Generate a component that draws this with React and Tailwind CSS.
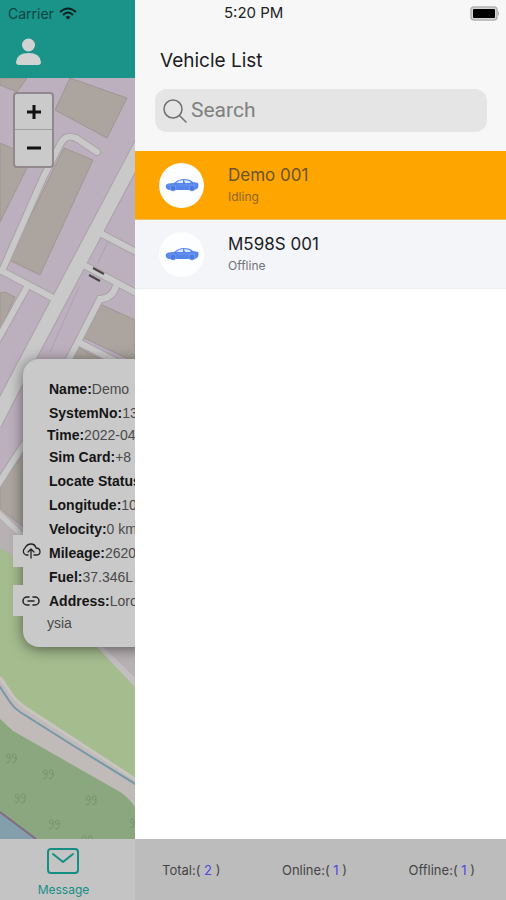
import { clsx } from "clsx";

const details = [
  { label: "Name:", value: "Demo" },
  { label: "SystemNo:", value: "13" },
  { label: "Time:", value: "2022-04", tight: true },
  { label: "Sim Card:", value: "+8" },
  { label: "Locate Status", value: "" },
  { label: "Longitude:", value: "10" },
  { label: "Velocity:", value: "0 km" },
  { label: "Mileage:", value: "2620" },
  { label: "Fuel:", value: "37.346L" },
  { label: "Address:", value: "Loro" },
];

const vehicles = [
  { name: "Demo 001", status: "Idling", active: true },
  { name: "M598S 001", status: "Offline", active: false },
];

const totals = [
  { label: "Total:", count: 2 },
  { label: "Online:", count: 1 },
  { label: "Offline:", count: 1 },
];

const roads = [
  "M97 152L76 138Q66 134 61 143L43 178L2 271",
  "M2 271L53 298",
  "M27 287L-3 341",
  "M100 233L140 254",
  "M80 263L140 295",
  "M116 286Q112 299 100 299L66 365",
  "M78 342L117 362",
  "M24 444L-3 486",
];

const buildings = [
  "70,78 127,98 107,138 55,110",
  "0,78 27,78 17,92 0,85",
  "0,143 30,156 27,168 0,222",
  "64,148 93,160 40,275 9,260",
  "0,293 5,292 15,297 0,330",
  "98,303 135,320 135,362 82,337",
  "77,347 102,360 70,360",
  "0,485 24,454 24,527 0,509",
];

const trees = [
  [5, 753],
  [42, 769],
  [14, 793],
  [85, 795],
  [48, 819],
  [129, 818],
  [81, 835],
];

function MapCanvas() {
  return (
    <svg
      className="absolute inset-0 h-full w-full"
      viewBox="0 78 135 761"
      preserveAspectRatio="xMinYMin slice"
      aria-hidden="true"
    >
      <rect y="78" width="135" height="761" fill="#bdb0be" />
      {buildings.map((points) => (
        <polygon key={points} points={points} fill="#aca59f" stroke="#9f9691" strokeWidth="1" />
      ))}

      {/* streets: darker casing first, then the fill */}
      <g fill="none" stroke="#aaa1a8">
        <path d="M146 136L20 374L-6 424" strokeWidth="16" />
        {roads.map((d) => (
          <path key={d} d={d} strokeWidth="8" strokeLinecap="round" />
        ))}
      </g>
      <g fill="none" stroke="#c9c9c9" strokeLinecap="round">
        <path d="M146 136L20 374L-6 424" strokeWidth="14" />
        {roads.map((d) => (
          <path key={d} d={d} strokeWidth="6" />
        ))}
      </g>
      <path d="M108 241L98 263M79 287L50 352" stroke="#ada1ae" fill="none" />
      <path d="M93 268L104 274M89 275L100 281" stroke="#4b4447" strokeWidth="2" />

      {/* park and canal */}
      <path d="M0 509L24 530L24 600L135 640V700L0 570Z" fill="#b8b1b4" />
      <path d="M-3 512L24 537" stroke="#c9c9c9" strokeWidth="5" />
      <path d="M90 640L140 688" stroke="#c4bfbf" strokeWidth="8" />
      <path d="M0 548Q14 555 30 572L96 646L135 687V839H0Z" fill="#a4bc8e" />
      <path
        d="M0 677L12 695Q17 702 26 708L135 779V807Q129 798 120 792L13 731L0 719Z"
        fill="#c0bab8"
      />
      <path d="M0 677L12 695Q17 702 26 708L135 779" stroke="#c8c5c0" strokeWidth="3" fill="none" />
      <path d="M0 719L13 731L120 792Q129 798 135 807V839H0Z" fill="#8aa77f" />
      <path d="M-2 684L10 702Q14 708 20 712L77 748L137 785" stroke="#7598a8" strokeWidth="2" fill="none" />
      <path d="M0 813L35 839H0Z" fill="#839fab" />
      <path d="M0 812L36 839" stroke="#806b83" strokeWidth="2" />
      <g fill="none" stroke="#76946e">
        {trees.map(([x, y]) => (
          <path
            key={`${x}-${y}`}
            transform={`translate(${x} ${y})`}
            d="M5 4A2 2 0 1 1 5 2V7L3 10M11 4A2 2 0 1 1 11 2V7L9 10M1 9L3 10M7 9L9 10"
          />
        ))}
      </g>
    </svg>
  );
}

function WifiIcon() {
  return (
    <svg viewBox="0 0 18 13" className="h-[13px] w-[18px]" fill="none" stroke="#06211f" strokeWidth="2">
      <path d="M1 5Q9 -2 17 5M4 8Q9 3 14 8" />
      <path d="M6.500 10Q9 8 11.500 10L9 12.500Z" fill="#06211f" stroke="none" />
    </svg>
  );
}

function BatteryIcon() {
  return (
    <svg viewBox="0 0 30 15" className="h-[15px] w-[30px]">
      <rect x="1" y="1" width="26" height="13" rx="3" fill="#d4d4d4" stroke="#b2b2b2" strokeWidth="1.500" />
      <rect x="3" y="3" width="22" height="9" rx="1" fill="#000" />
      <path d="M28 5Q30 7.500 28 10Z" fill="#a8a8a8" />
    </svg>
  );
}

function CarIcon() {
  return (
    <svg viewBox="0 0 34 14" className="h-[14px] w-[34px]">
      <path
        d="M1 7Q2 5 9 5Q14 1 19 1Q25 1 28 4L33 5Q34 7 33 10L30 12H4Q0 11 1 7Z"
        fill="#5584ea"
      />
      <path d="M11 5Q14 2 18 2V5ZM19 2Q23 2 26 4L25 5H20Z" fill="#dce7fd" />
      <g fill="#4a79e2" stroke="#7ca2f3" strokeWidth="0.800">
        <circle cx="8" cy="10" r="3" />
        <circle cx="27" cy="10" r="3" />
      </g>
      <path d="M2 7H5M12 7H31" stroke="#6d96f0" />
    </svg>
  );
}

function MapPopup() {
  return (
    <div className="absolute left-[23px] top-[281px] w-[300px] rounded-2xl bg-[#c9c9c9] pb-[14px] pl-[26px] pt-[18px] text-[14px] text-[#4a4a4a] shadow-[0_2px_14px_rgba(0,0,0,0.5)]">
      {details.map(({ label, value, tight }) => (
        <p
          key={label}
          className={clsx("whitespace-nowrap", tight ? "-ml-[2px] leading-5" : "leading-6")}
        >
          <b className="text-[#151515]">{label}</b>
          {value}
        </p>
      ))}
      <p className="-ml-[2px] leading-5">ysia</p>
    </div>
  );
}

function MapPane() {
  return (
    <div className="flex w-[135px] shrink-0 flex-col overflow-hidden">
      <header className="h-[78px] bg-[#1a9389] px-2">
        <div className="flex h-[26px] items-center gap-[5px] text-[14px] text-[#0c4541]">
          <span>Carrier</span>
          <WifiIcon />
        </div>
        <button type="button" aria-label="Account" className="ml-2 mt-3 block">
          <svg viewBox="0 0 25 27" className="h-[27px] w-[25px]" fill="#d0d3d2">
            <circle cx="12.500" cy="7" r="6.500" />
            <path d="M0 24Q1 15 12.500 15Q24 15 25 24Q25 27 22 27H3Q0 27 0 24Z" />
          </svg>
        </button>
      </header>

      <main className="relative flex-1 overflow-hidden font-['Liberation_Sans',Arial,sans-serif]">
        <MapCanvas />
        <div className="absolute left-[13px] top-[14px] flex w-[41px] flex-col rounded-[4px] border-2 border-[#8f898c] bg-[#cacaca]">
          <button type="button" aria-label="Zoom in" className="flex h-9 items-center justify-center border-b border-[#a0a0a0]">
            <svg viewBox="0 0 14 14" className="size-[14px]" stroke="#111" strokeWidth="3">
              <path d="M7 0V14M0 7H14" />
            </svg>
          </button>
          <button type="button" aria-label="Zoom out" className="flex h-9 items-center justify-center">
            <svg viewBox="0 0 14 14" className="size-[14px]" stroke="#111" strokeWidth="3">
              <path d="M0 7H14" />
            </svg>
          </button>
        </div>

        <MapPopup />
        <button
          type="button"
          aria-label="Upload"
          className="absolute left-[13px] top-[457px] flex h-8 w-9 items-center justify-center bg-[#c9c9c9]"
        >
          <svg viewBox="0 0 20 16" className="h-4 w-5" fill="none" stroke="#222" strokeWidth="1.300" strokeLinecap="round" strokeLinejoin="round">
            <path d="M7 12H5A4 4 0 0 1 4 5Q6 1 10 1Q14 1 15 5Q19 5 19 9Q19 12 15 12H13M10 15V6M7 9L10 6L13 9" />
          </svg>
        </button>
        <button
          type="button"
          aria-label="Copy link"
          className="absolute left-[13px] top-[507px] flex h-[31px] w-9 items-center justify-center bg-[#c9c9c9]"
        >
          <svg viewBox="0 0 18 10" className="h-[10px] w-[18px]" fill="none" stroke="#222" strokeWidth="1.500" strokeLinecap="round">
            <path d="M7 1H5A4 4 0 0 0 5 9H7M11 1H13A4 4 0 0 1 13 9H11M6 5H12" />
          </svg>
        </button>
      </main>

      <nav className="flex h-[61px] flex-col items-center bg-[#c4c4c4] pr-2">
        <a href="#message" className="flex flex-col items-center pt-[9px] text-[12px] leading-4 text-[#158f84]">
          <svg viewBox="0 0 32 26" className="mb-2 h-[26px] w-8" fill="none" stroke="#158f84" strokeWidth="2" strokeLinecap="round" strokeLinejoin="round">
            <rect x="1" y="1" width="30" height="24" rx="3" />
            <path d="M6 6L16 14L26 6" />
          </svg>
          Message
        </a>
      </nav>
    </div>
  );
}

function VehicleRow({ name, status, active }) {
  return (
    <li className={clsx("border-b", active ? "border-[#f3bd57] bg-[#ffa500]" : "border-[#eceef2] bg-[#f3f5f9]")}>
      <button type="button" className="flex h-[68px] w-full items-center gap-6 pl-6 text-left">
        <span className="flex size-[45px] items-center justify-center rounded-full bg-[#fdfeff]">
          <CarIcon />
        </span>
        <span className="flex flex-col pb-px">
          <span className={clsx("text-[17px] leading-6", active ? "text-[#6b532c]" : "text-[#1d1d1f]")}>
            {name}
          </span>
          <span className={clsx("text-[12px] leading-5", active ? "text-[#8c6726]" : "text-[#707276]")}>
            {status}
          </span>
        </span>
      </button>
    </li>
  );
}

function VehicleDrawer() {
  return (
    <aside className="flex min-w-0 flex-1 flex-col bg-white">
      <header className="h-[151px] bg-[#f7f7f7]">
        <div className="flex h-[26px] items-center justify-between pl-[89px] pr-[6px] text-[15px] text-[#222]">
          <time>5:20 PM</time>
          <BatteryIcon />
        </div>
        <h1 className="pl-[25px] pt-[22px] text-[19px] leading-[26px] text-[#1c1c1e]">Vehicle List</h1>
        <label className="ml-5 mr-[19px] mt-[15px] flex h-[43px] items-center gap-1 rounded-xl bg-[#e5e5e5] pl-2">
          <svg viewBox="0 0 24 24" className="size-6 shrink-0" fill="none" stroke="#6f6f6f" strokeWidth="1.500" strokeLinecap="round">
            <circle cx="10" cy="10" r="9" />
            <path d="M17 17L23 23" />
          </svg>
          <input
            type="search"
            aria-label="Search"
            placeholder="Search"
            className="min-w-0 flex-1 bg-transparent font-[Roboto,sans-serif] text-[21px] text-[#333] outline-none placeholder:text-[#808080]"
          />
        </label>
      </header>

      <ul className="flex-1">
        {vehicles.map((vehicle) => (
          <VehicleRow key={vehicle.name} {...vehicle} />
        ))}
      </ul>

      <footer className="flex h-[61px] items-center justify-between bg-[#bcbcbc] pl-[27px] pr-[31px] pt-[2px] text-[13px] text-[#454545]">
        {totals.map(({ label, count }) => (
          <span key={label}>
            {label}( <span className="text-[#5046e0]">{count}</span> )
          </span>
        ))}
      </footer>
    </aside>
  );
}

export default function App() {
  return (
    <div className="flex min-h-screen font-[Inter,Roboto,sans-serif]">
      <MapPane />
      <VehicleDrawer />
    </div>
  );
}
